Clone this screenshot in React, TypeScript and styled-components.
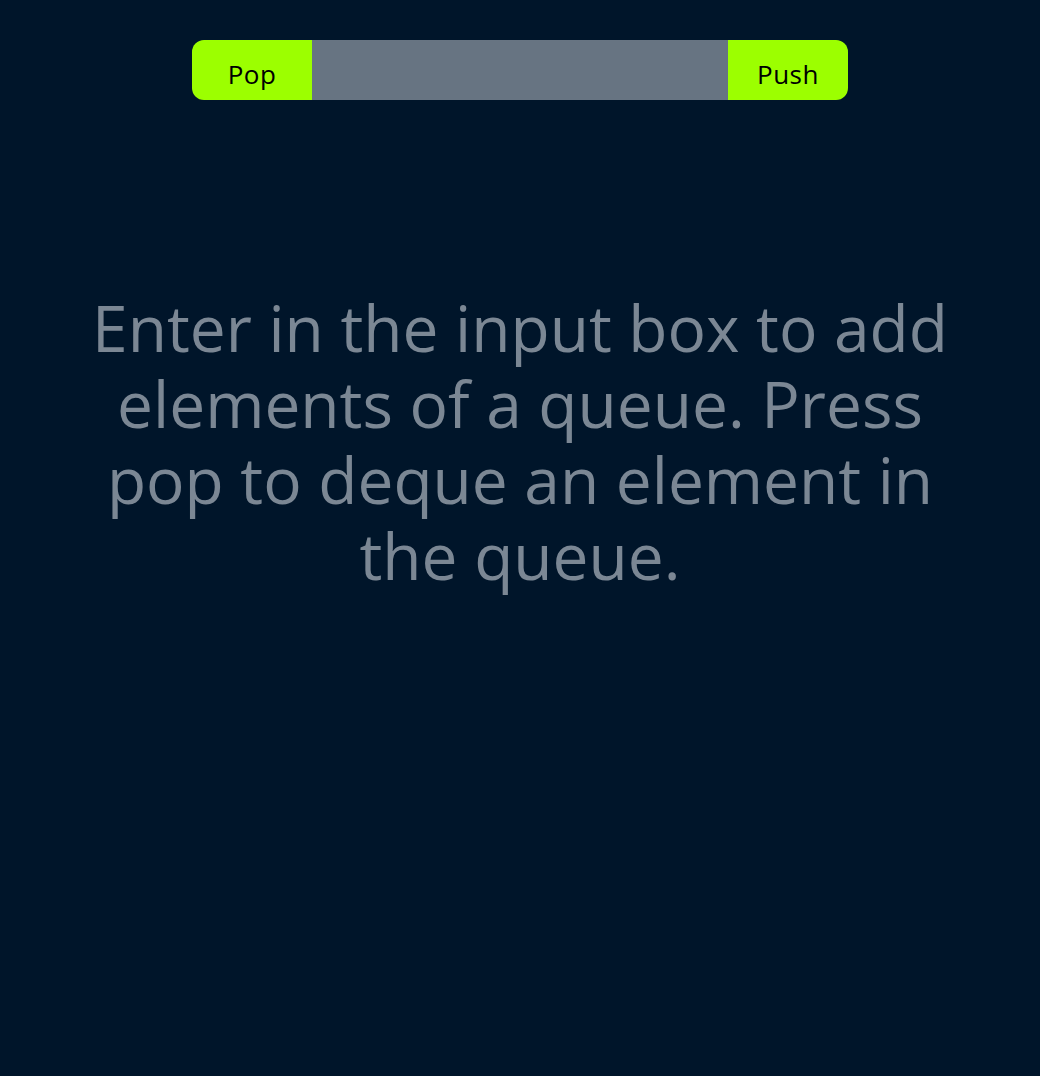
import React, { useState } from 'react';
import styled, { createGlobalStyle } from 'styled-components';

const GlobalStyle = createGlobalStyle`
	html, body {
		margin: 0;
		padding: 0;
		background: #00152a;
	}

	body {
		font-family: 'Open Sans', 'Noto Sans', sans-serif;
	}
`;

const Page = styled.div`
	min-height: 1076px;
	display: flex;
	flex-direction: column;
	align-items: center;
	padding-top: 40px;
	box-sizing: border-box;
	background: #00152a;
`;

const Controls = styled.div`
	display: flex;
	width: 656px;
	height: 60px;
	border-radius: 12px;
	overflow: hidden;
`;

const ActionButton = styled.button`
	width: 120px;
	height: 100%;
	border: none;
	padding: 7px 0 0;
	background: #9cff00;
	color: #000;
	font-family: 'Open Sans', 'Noto Sans', sans-serif;
	font-size: 26px;
	letter-spacing: 0.5px;
	cursor: pointer;
`;

const ValueInput = styled.input`
	flex: 1;
	min-width: 0;
	height: 100%;
	border: none;
	outline: none;
	padding: 0 16px;
	background: #677482;
	color: #fff;
	font-family: 'Open Sans', 'Noto Sans', sans-serif;
	font-size: 24px;
`;

const Message = styled.p`
	width: 900px;
	margin: 190px 0 0;
	text-align: center;
	color: #7b8794;
	font-size: 64px;
	line-height: 76px;
`;

export default function App(): React.ReactElement {
	const [value, setValue] = useState('');
	const [queue, setQueue] = useState<string[]>([]);

	const push = () => {
		if (!value.trim()) return;
		setQueue([...queue, value.trim()]);
		setValue('');
	};

	const pop = () => {
		setQueue(queue.slice(1));
	};

	return (
		<Page>
			<GlobalStyle />
			<Controls>
				<ActionButton onClick={pop}>Pop</ActionButton>
				<ValueInput
					value={value}
					onChange={(e) => setValue(e.target.value)}
					onKeyDown={(e) => {
						if (e.key === 'Enter') push();
					}}
				/>
				<ActionButton onClick={push}>Push</ActionButton>
			</Controls>
			{queue.length === 0 ? (
				<Message>
					Enter in the input box to add elements of a queue. Press pop to deque an element in the queue.
				</Message>
			) : null}
		</Page>
	);
}
